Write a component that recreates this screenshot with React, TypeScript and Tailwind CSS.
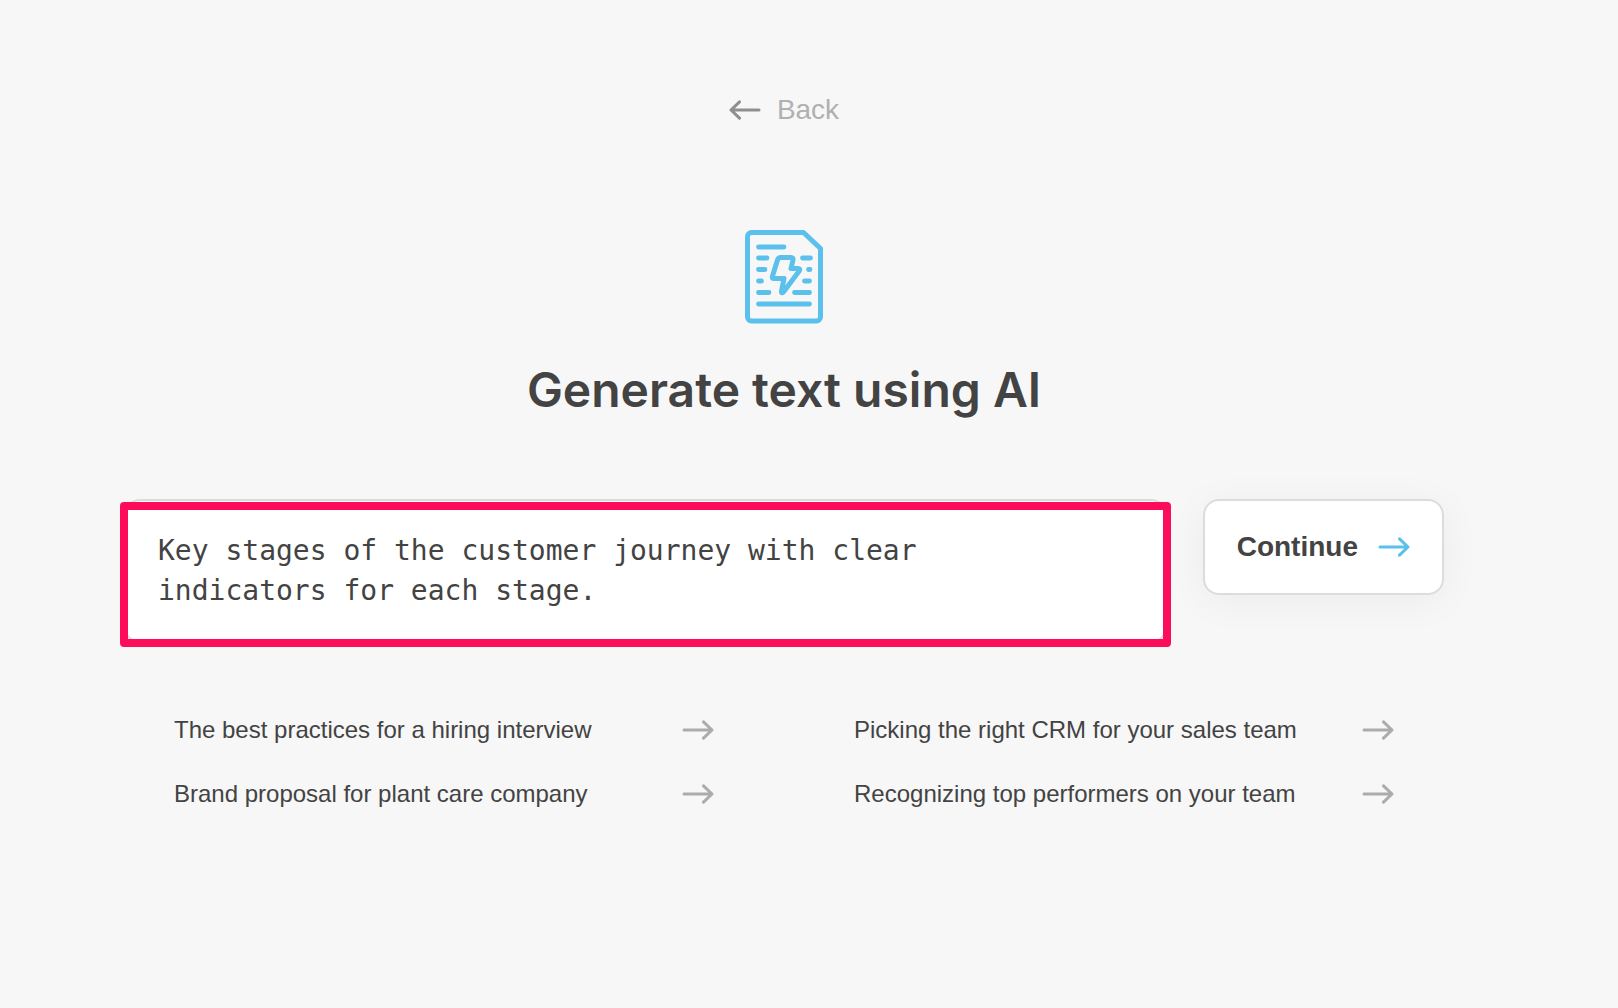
import React, { useState } from 'react';

interface ArrowProps {
  className?: string;
}

const suggestions = [
  'The best practices for a hiring interview',
  'Picking the right CRM for your sales team',
  'Brand proposal for plant care company',
  'Recognizing top performers on your team',
];

const ArrowRight: React.FC<ArrowProps> = ({ className }) => (
  <svg
    viewBox="0 0 32 20"
    fill="none"
    stroke="currentColor"
    strokeWidth="3"
    strokeLinecap="round"
    strokeLinejoin="round"
    aria-hidden="true"
    className={`h-5 w-8 shrink-0 ${className ?? ''}`}
  >
    <path d="M2 10h28M21.5 1.8l8.5 8.2-8.5 8.2" />
  </svg>
);

const DocumentIcon: React.FC = () => (
  <svg
    viewBox="0 0 78 94"
    fill="none"
    stroke="currentColor"
    strokeLinecap="round"
    strokeLinejoin="round"
    aria-hidden="true"
    className="h-[94px] w-[78px] text-[#5bc1ec]"
  >
    <path
      strokeWidth="5"
      d="M6 2.5H58.5L75.5 18.5V87a4 4 0 0 1-4 4H6.5a4 4 0 0 1-4-4V6.5a4 4 0 0 1 4-4z"
    />
    <path
      strokeWidth="4.8"
      d="M13.5 17H39M13.5 28h8.500M57.500 28h8M13.500 39.500h6.500M63.500 39.500h1.500M13.500 51h3M59.500 51h5M13.500 62.500h10.500M49.500 62.500h15M13.500 74H64.500"
    />
    <path
      strokeWidth="5"
      d="M35.500 27.500H46q2.500 0 2 2.500l-2 8.500h7q2.500 0 1.500 2L38.500 62q-2.500 2-2-1l2.500-12.500H29q-2.500 0-1.500-2.500l5-16q1-2.500 3-2.500z"
    />
  </svg>
);

export default function App() {
  const [prompt, setPrompt] = useState(
    'Key stages of the customer journey with clear indicators for each stage.',
  );

  return (
    <div className="min-h-screen bg-[#f7f7f7] pr-[50px] font-['Liberation_Sans',Arial,sans-serif] text-[#434343]">
      <main className="mx-auto flex max-w-[1320px] flex-col items-center pt-[90px]">
        <button type="button" className="flex items-center gap-4 text-[28px] leading-10 text-[#b0b0b0]">
          <ArrowRight className="rotate-180 text-[#8f8f8f]" />
          Back
        </button>

        <div className="mt-[100px]">
          <DocumentIcon />
        </div>

        <h1 className="mt-[34px] font-[Inter,sans-serif] text-[48px] leading-[64px] font-semibold">
          Generate text using AI
        </h1>

        <div className="mt-[77px] flex w-full items-start gap-9">
          <div className="relative flex-1">
            <textarea
              aria-label="Describe your text"
              rows={2}
              value={prompt}
              onChange={(e) => setPrompt(e.target.value)}
              className="block w-full resize-none rounded-2xl border-2 border-[#dcdcdc] bg-white py-[30px] pr-[120px] pl-8 font-['DejaVu_Sans_Mono',monospace] text-[28px] leading-10 outline-none"
            />
            <div className="pointer-events-none absolute -inset-x-1 top-[3px] -bottom-1 rounded-[4px] border-8 border-[#fc0d5c]" />
          </div>
          <button
            type="button"
            className="flex h-24 items-center gap-5 rounded-2xl border-2 border-[#dcdcdc] bg-white px-8 text-[28px] font-bold shadow-[0_6px_40px_rgba(0,0,0,0.05)]"
          >
            Continue
            <ArrowRight className="text-[#5bc1ec]" />
          </button>
        </div>

        <div className="mt-[67px] grid w-full grid-cols-2 gap-x-[140px] gap-y-6 px-[50px]">
          {suggestions.map((text) => (
            <button
              key={text}
              type="button"
              className="flex items-center justify-between text-left text-[24px] leading-10"
            >
              {text}
              <ArrowRight className="text-[#acacac]" />
            </button>
          ))}
        </div>
      </main>
    </div>
  );
}
